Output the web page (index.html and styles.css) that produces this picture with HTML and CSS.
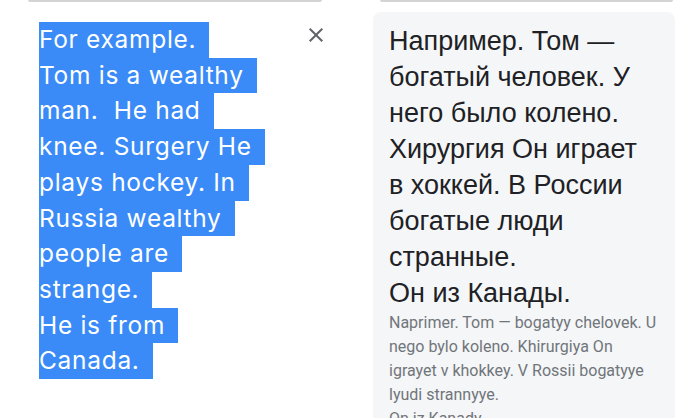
FILE: index.html
```html
<!DOCTYPE html>
<html lang="en">
<head>
  <meta charset="UTF-8" />
  <meta name="viewport" content="width=device-width, initial-scale=1.0"/>
  <title>Translate</title>
  <link rel="stylesheet" href="styles.css">
</head>
<body>

  <div class="top-edges">
    <div class="edge"></div>
    <div class="edge"></div>
  </div>

  <div class="panes">
    <section class="source">
      <p class="source-text">
        <span class="sel">For example.</span>
        <span class="sel">Tom is a wealthy</span>
        <span class="sel">man.  He had</span>
        <span class="sel">knee. Surgery He</span>
        <span class="sel">plays hockey. In</span>
        <span class="sel">Russia wealthy</span>
        <span class="sel">people are</span>
        <span class="sel">strange.</span>
        <span class="sel">He is from</span>
        <span class="sel">Canada.</span>
      </p>
      <button class="clear-btn" aria-label="Clear source text">
        <svg width="24" height="24" viewBox="0 0 24 24">
          <path d="M19 6.41L17.59 5 12 10.59 6.41 5 5 6.41 10.59 12 5 17.59 6.41 19 12 13.41 17.59 19 19 17.59 13.41 12z" fill="#5f6368"/>
        </svg>
      </button>
    </section>

    <section class="target">
      <p class="target-text">Например. Том — богатый человек. У него было колено. Хирургия Он играет в хоккей. В России богатые люди странные.<br>Он из Канады.</p>
      <p class="translit">Naprimer. Tom — bogatyy chelovek. U nego bylo koleno. Khirurgiya On igrayet v khokkey. V Rossii bogatyye lyudi strannyye.<br>On iz Kanady.</p>
    </section>
  </div>

</body>
</html>
```

FILE: styles.css
```css
body {
  margin: 0;
  background: #fff;
  font-family: "Liberation Sans", Arial, sans-serif;
  overflow: hidden;
}

.top-edges {
  display: flex;
  gap: 58px;
  padding: 0 21px 0 28px;
}

.edge {
  flex: 1;
  height: 2px;
  background: #d4d4d4;
  border-radius: 0 0 2px 2px;
}

.panes {
  display: grid;
  grid-template-columns: 1fr 302px;
  column-gap: 45px;
  padding: 0 19px 0 39px;
}

/* left side: selected source text */
.source {
  display: flex;
  align-items: flex-start;
  padding-top: 20px;
}

.source-text {
  flex: 1;
  margin: 0;
  font-family: Inter, sans-serif;
  font-size: 24.5px;
  letter-spacing: 0.7px;
  line-height: 35.7px;
  color: #fff;
}

.sel {
  display: block;
  width: fit-content;
  white-space: pre;
  padding-right: 13px;
  background: #3a8bf7;
}

.clear-btn {
  width: 24px;
  height: 24px;
  margin-top: 1px;
  padding: 0;
  border: none;
  background: none;
  cursor: pointer;
}

.clear-btn svg {
  display: block;
}

/* right side: translation */
.target {
  margin-top: 10px;
  padding: 11px 12px 40px 16px;
  background: #f5f6f8;
  border-radius: 8px;
}

.target-text {
  margin: 0;
  padding-right: 8px;
  font-size: 27px;
  line-height: 36px;
  color: #202124;
}

.translit {
  margin: 0;
  font-family: Roboto, sans-serif;
  font-size: 16px;
  line-height: 24px;
  color: #70757a;
}
```
